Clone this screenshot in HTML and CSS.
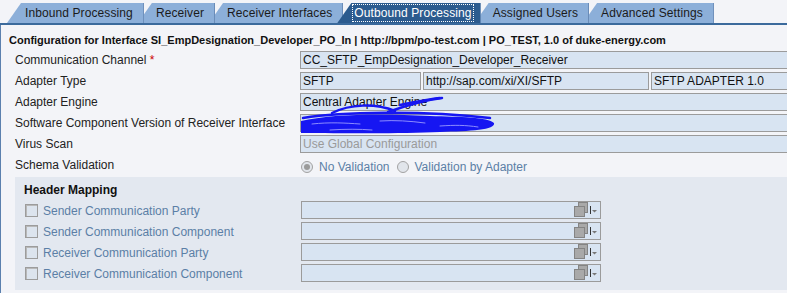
FILE: index.html
```html
<!DOCTYPE html>
<html lang="en">
<head>
    <meta charset="UTF-8">
    <title>Outbound Processing</title>
    <link rel="stylesheet" href="styles.css">
</head>
<body>
    <div class="tabs">
        <div class="tab t1">Inbound Processing</div>
        <div class="tab t2">Receiver</div>
        <div class="tab t3">Receiver Interfaces</div>
        <div class="tab t4 active"><span>Outbound Processing</span></div>
        <div class="tab t5">Assigned Users</div>
        <div class="tab t6">Advanced Settings</div>
    </div>

    <div class="panel">
        <div class="title">Configuration for Interface SI_EmpDesignation_Developer_PO_In | http://bpm/po-test.com | PO_TEST, 1.0 of duke-energy.com</div>

        <div class="form">
            <div class="row">
                <label>Communication Channel <span class="req">*</span></label>
                <div class="field wide">CC_SFTP_EmpDesignation_Developer_Receiver</div>
            </div>
            <div class="row">
                <label>Adapter Type</label>
                <div class="triple">
                    <div class="field">SFTP</div>
                    <div class="field">http://sap.com/xi/XI/SFTP</div>
                    <div class="field wide">SFTP ADAPTER 1.0</div>
                </div>
            </div>
            <div class="row">
                <label>Adapter Engine</label>
                <div class="field wide">Central Adapter Engine</div>
            </div>
            <div class="row">
                <label>Software Component Version of Receiver Interface</label>
                <div class="field wide"></div>
            </div>
            <div class="row">
                <label>Virus Scan</label>
                <div class="field wide muted">Use Global Configuration</div>
            </div>
            <div class="row">
                <label>Schema Validation</label>
                <div class="radios">
                    <span class="radio checked"></span><span class="opt">No Validation</span>
                    <span class="radio"></span><span class="opt">Validation by Adapter</span>
                </div>
            </div>
        </div>

        <div class="mapping">
            <div class="mapping-title">Header Mapping</div>
            <div class="mrow">
                <div class="check"><span class="box"></span>Sender Communication Party</div>
                <div class="dropdown"><svg width="24" height="16" viewBox="0 0 24 16"><rect x="5.5" y="0.5" width="9" height="10" fill="#a9a9a9" stroke="#848484"/><rect x="1.5" y="4.5" width="10" height="10" fill="#a9a9a9" stroke="#848484"/><line x1="17.5" y1="4" x2="17.5" y2="12" stroke="#333"/><polygon points="19,8 24,8 21.5,10.5" fill="#777"/></svg></div>
            </div>
            <div class="mrow">
                <div class="check"><span class="box"></span>Sender Communication Component</div>
                <div class="dropdown"><svg width="24" height="16" viewBox="0 0 24 16"><rect x="5.5" y="0.5" width="9" height="10" fill="#a9a9a9" stroke="#848484"/><rect x="1.5" y="4.5" width="10" height="10" fill="#a9a9a9" stroke="#848484"/><line x1="17.5" y1="4" x2="17.5" y2="12" stroke="#333"/><polygon points="19,8 24,8 21.5,10.5" fill="#777"/></svg></div>
            </div>
            <div class="mrow">
                <div class="check"><span class="box"></span>Receiver Communication Party</div>
                <div class="dropdown"><svg width="24" height="16" viewBox="0 0 24 16"><rect x="5.5" y="0.5" width="9" height="10" fill="#a9a9a9" stroke="#848484"/><rect x="1.5" y="4.5" width="10" height="10" fill="#a9a9a9" stroke="#848484"/><line x1="17.5" y1="4" x2="17.5" y2="12" stroke="#333"/><polygon points="19,8 24,8 21.5,10.5" fill="#777"/></svg></div>
            </div>
            <div class="mrow">
                <div class="check"><span class="box"></span>Receiver Communication Component</div>
                <div class="dropdown"><svg width="24" height="16" viewBox="0 0 24 16"><rect x="5.5" y="0.5" width="9" height="10" fill="#a9a9a9" stroke="#848484"/><rect x="1.5" y="4.5" width="10" height="10" fill="#a9a9a9" stroke="#848484"/><line x1="17.5" y1="4" x2="17.5" y2="12" stroke="#333"/><polygon points="19,8 24,8 21.5,10.5" fill="#777"/></svg></div>
            </div>
        </div>
    </div>

    <!-- redaction scribble drawn over the screenshot -->
    <svg class="scribble" width="787" height="293" viewBox="0 0 787 293">
        <g fill="none" stroke="#1616f2" stroke-linecap="round" stroke-width="2.5">
            <path d="M332 113 C 350 104, 375 103, 395 111"/>
            <path d="M388 112 C 405 106, 425 100, 442 98"/>
            <path d="M400 105 C 420 101, 430 99, 440 98"/>
            <path d="M303 118 C 340 112, 420 110, 490 118"/>
        </g>
        <path d="M301 121 C 330 114, 380 113, 430 116 C 460 117, 488 117, 494 123 C 496 130, 470 131, 440 132 C 400 134, 340 133, 301 133 Z" fill="#1616f2"/>
        <g fill="none" stroke="#8c8cff" stroke-width="1" stroke-linecap="round">
            <path d="M312 124 C 330 122, 345 123, 360 124"/>
            <path d="M380 121 C 395 120, 410 121, 425 123"/>
            <path d="M440 126 C 455 125, 465 125, 478 127"/>
            <path d="M330 130 C 345 129, 360 129, 372 130"/>
        </g>
    </svg>
</body>
</html>
```

FILE: styles.css
```css
body {
    margin: 0;
    background: #f3f4f8;
    font-family: "Liberation Sans", Arial, sans-serif;
    font-size: 12px;
    color: #222;
    overflow: hidden;
    position: relative;
    height: 293px;
}
.tabs {
    display: flex;
    padding: 3px 0 0 7px;
    height: 20px;
    border-bottom: 2px solid #3b6a9c;
}
.tab {
    position: relative;
    height: 20px;
    line-height: 20px;
    padding: 0 10px 0 18px;
    margin-left: -6px;
    background: #8cafd9;
    color: #1b1b1b;
    letter-spacing: 0.1px;
    border-right: 1px solid #6a8cb8;
    clip-path: polygon(14px 0, 100% 0, 100% 100%, 0 100%);
}
.t1 { margin-left: 0; z-index: 6; }
.t2 { z-index: 5; }
.t3 { z-index: 4; }
.t4 { z-index: 7; }
.t5 { z-index: 2; }
.t6 { z-index: 1; }
.tab.active {
    background: #2c5b8e;
    color: #fff;
    padding-left: 15px;
    padding-right: 6px;
}
.tab.active span {
    border: 1px dotted #fff;
    padding: 0 1px;
    line-height: 16px;
    display: inline-block;
}
.panel {
    border-left: 1px solid #5b80ae;
    height: 268px;
    overflow: hidden;
}
.title {
    padding: 4px 0 0 8px;
    height: 22px;
    line-height: 22px;
    font-size: 11px;
    font-weight: bold;
    color: #111;
    white-space: nowrap;
}
.form {
    padding-left: 14px;
}
.row {
    display: grid;
    grid-template-columns: 285px 1fr;
    height: 21px;
}
.row label {
    line-height: 19px;
    white-space: nowrap;
}
.req {
    color: #c00;
}
.field {
    height: 18px;
    box-sizing: border-box;
    border: 1px solid #9b9b9b;
    background: #d8e4f2;
    padding: 0 2px;
    line-height: 16px;
    color: #111;
    white-space: nowrap;
    overflow: hidden;
}
.field.wide {
    margin-right: -20px;
}
.field.muted {
    color: #9a9a9a;
}
.triple {
    display: grid;
    grid-template-columns: 121px 226px 1fr;
    gap: 2px;
}
.radios {
    display: flex;
    align-items: center;
    height: 21px;
    color: #5b7fa6;
}
.radio {
    width: 10px;
    height: 10px;
    border: 1px solid #a2a2a2;
    border-radius: 50%;
    background: #e1e5eb;
    margin: 0 6px 0 1px;
    position: relative;
}
.radio.checked::after {
    content: "";
    position: absolute;
    left: 2px;
    top: 2px;
    width: 6px;
    height: 6px;
    border-radius: 50%;
    background: #9a9a9a;
}
.opt {
    margin-right: 6px;
}
.mapping {
    margin-left: 14px;
    background: #e3e8f0;
    padding: 0 0 5px 9px;
}
.mapping-title {
    height: 24px;
    line-height: 27px;
    font-weight: bold;
    color: #111;
}
.mrow {
    display: grid;
    grid-template-columns: 277px 300px;
    height: 21px;
}
.check {
    display: flex;
    align-items: center;
    height: 19px;
    color: #5b7fa6;
    white-space: nowrap;
}
.box {
    width: 11px;
    height: 11px;
    border: 1px solid #9c9c9c;
    box-shadow: inset 1px 1px 0 #b8b8b8;
    background: #dce4ee;
    margin: 0 5px 0 1px;
}
.dropdown {
    height: 18px;
    box-sizing: border-box;
    border: 1px solid #9b9b9b;
    background: #d8e4f2;
    display: flex;
    justify-content: flex-end;
    padding-right: 3px;
}
.scribble {
    position: absolute;
    left: 0;
    top: 0;
    pointer-events: none;
}
```
